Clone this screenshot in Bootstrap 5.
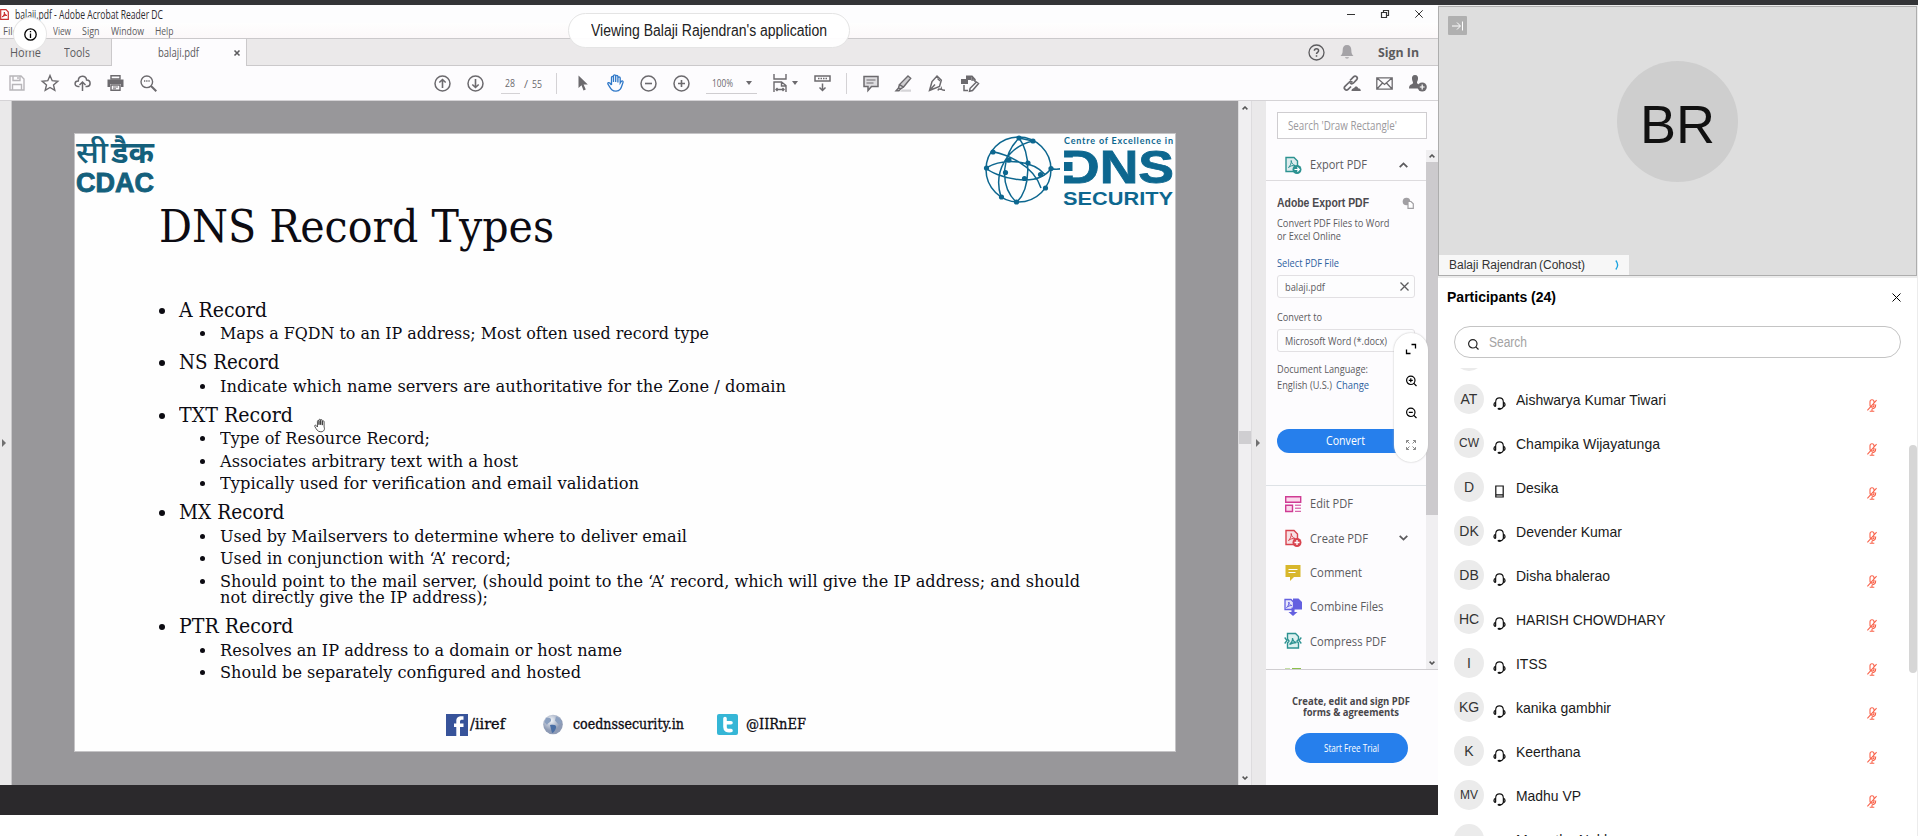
<!DOCTYPE html>
<html lang="en">
<head>
<meta charset="utf-8">
<meta name="viewport" content="width=device-width, initial-scale=1">
<title>Viewing Balaji Rajendran's application</title>
<link href="https://cdn.jsdelivr.net/npm/bootstrap@5.3.0/dist/css/bootstrap.min.css" rel="stylesheet">
<style>
  body{font-family:"Liberation Sans",Arial,sans-serif;background:#fff;color:#000;height:836px;overflow:hidden;line-height:1}
  svg{display:block;flex:none;overflow:visible}
  .stroke{fill:none;stroke:currentColor}
  [data-w]{white-space:nowrap;display:inline-block;transform-origin:0 50%;flex:none}
  .top-strip{height:5px;background:#333437}
  .stage{width:1438px;height:831px}
  .acro{height:780px;font-family:"Open Sans","Noto Sans",sans-serif;color:#5c5b5e;background:#fdfdfe}
  .title-line{height:18px;padding:1px 0 0 0;font-size:12px;color:#2e2c30}
  .app-ic{margin-right:6px}
  .win-ctl{margin-top:-1px;padding-right:15px;gap:26px;color:#333}
  .menu-line{height:15px;font-size:11.5px;background:linear-gradient(#fefefe,#fcf8f9);padding-left:3px}
  .menu-line span+span{margin-left:11px}
  .tabs-line{height:28px;border:1px solid #cbc9cb;border-width:1px 0;background:#ebe9ea;font-size:13px}
  .tab-cell{height:27px}
  .tab-home{padding-left:10px;width:64px}
  .tab-tools{width:48px;border-right:1px solid #cbc9cb}
  .tab-file{width:135px;background:#fdfcfe;border-right:1px solid #cbc9cb;padding:0 6px 0 46px;margin-bottom:-1px}
  .acct{padding-right:19px}
  .bell{margin:0 24px 0 15px}
  .tools-line{height:35px;border-bottom:1px solid #d5d3d6;background:#fdfcfe;color:#6c6a6e;font-size:11px}
  .tool{width:33px;height:34px;display:flex;align-items:center;justify-content:center}
  .tools-mid{margin-left:261px}
  .pages{width:73px;height:34px;padding-left:9px;margin-right:1px}
  .num-box{width:19px;height:21px;border-bottom:1px solid #d4d2d5;text-align:center;line-height:20px}
  .vsep{width:1px;height:21px;background:#d4d2d5}
  .vsep-b{margin:0 7px 0 7px}
  .zoom-box{width:51px;height:21px;border-bottom:1px solid #cfcdd0;margin:0 7px 0 8px;padding:0 5px 0 6px}
  .fit-box{width:42px;padding-left:9px;gap:5px}
  .caret-dn{width:0;height:0;border:3px solid transparent;border-top:4px solid #6c6a6e;border-bottom:0}
  .tri-r{width:0;height:0;border:4px solid transparent;border-left:4px solid #707070;border-right:0}
  .work{height:684px}
  .rail-l{width:12px;background:#eae9ea;border-right:1px solid #c9c8ca;padding-left:2px}
  .canvas{width:1226px;background:#98979a;padding:32px 0 0 62px}
  .sbar{background:#f0eff1;color:#555}
  .sbar-doc{width:14px;border:1px solid #dddcde;border-width:0 1px;padding:5px 0}
  .rail-r{width:14px;background:#eae9ea;padding-left:4px}
  .thumb-doc{height:13px;background:#cfced1;margin-bottom:-1px;transform:translateY(-6px)}

  /* slide */
  .slide{width:1102px;height:619px;background:#fefefe;border:1px solid #c5c4c6;color:#0c0b12;font-family:"DejaVu Serif Condensed","DejaVu Serif","Liberation Serif",serif}
  .logos{height:74px;padding:0 0 0 1px}
  .slide-title{font-size:45px;line-height:56px;margin:-9px 0 0 84px;height:56px;font-weight:400}
  .bul{margin:41.500px 0 0 85px;padding:0;list-style:none}
  .l1{font-size:20.5px;line-height:26.500px;margin-top:3.800px;padding-left:19px;position:relative;height:26.500px}
  .l2{font-size:16.2px;line-height:22.400px;height:22.400px;padding-left:60px;position:relative}
  .l2.cont{margin-top:-5.800px}
  .l1:before,.l2:not(.cont):before{content:"";position:absolute;border-radius:50%;background:#0c0b12}
  .l1:before{width:6px;height:6px;left:-1px;top:11px}
  .l2:before{width:5px;height:5px;left:40px;top:8px}
  .foot{margin:28px 0 0 371px;font-size:15px;height:24px;-webkit-text-stroke:.3px #0c0b12}
  .foot .f1{margin-left:2px}
  .foot .f2{margin-left:38px}.foot .f3{margin-left:33px}
  .foot .f4{margin-left:10px}

  /* tools pane */
  .pane{width:172px;background:#fdfcfe;font-size:11.500px}
  .pane-top{height:49px;padding:11px 0 0 11px}
  .find{width:150px;height:27px;border:1px solid #cfcdd0;background:#fff;color:#9b999d;padding-left:10px;font-size:12px}
  .pane-mid{height:520px;border-bottom:1px solid #d0ced1}
  .pane-list{width:160px;overflow:hidden;height:519px}
  .sbar-pane{width:12px}
  .thumb-pane{height:353px;background:#cccacd}
  .exp{height:31px;border-bottom:1px solid #dddbde;font-size:13.500px;padding:0 18px 0 18px}
  .tool-row{height:34.300px;padding-left:18px;font-size:13.500px}
  .tool-row .ti,.exp .ti{margin-right:8px}
  .chev{margin-right:18px}
  .pl{padding-left:11px}
  .ln{height:13px;display:flex;align-items:center}
  .hd{font-family:"Liberation Sans",sans-serif;font-weight:700;font-size:12px;color:#4c4a4e;margin-top:14px;height:16px;padding-right:12px}
  .blurb{margin-top:5px}
  .link{color:#2d619f}
  .sel{margin-top:14px}
  .f-a{margin-top:6px}
  .cv{margin-top:12px}
  .f-b{margin-top:6px}
  .dl{margin-top:10px}
  .el{margin-top:3px}
  .field{width:138px;height:23px;border:1px solid #e2e0e3;border-radius:3px;padding:0 5px 0 7px;background:#fdfdfe}
  .cta{background:#267fec;color:#fff;border-radius:16px}
  .cta-convert{width:138px;height:24px;font-size:12.500px;margin:38px 0 32px 0}
  .more{padding-top:1px}
  .pane-foot{height:115px;padding-top:25px;font-size:11px;font-weight:700;color:#48464a;padding-right:2px}
  .cta-trial{width:113px;height:30px;font-size:10.500px;font-weight:400;margin:16px 0 0 0}
  .dark-band{height:30px;background:#2b292c}

  /* overlays */
  .info-dot{left:14px;top:18px;width:32px;height:32px;background:#fff;box-shadow:0 0 0 1px #e6e6e6}
  .view-pill{left:568px;top:13px;width:282px;height:35px;background:#fffffff2;border:1px solid #e4e4e4;font-size:16px;color:#222}
  .zoom-pill{left:1394px;top:333px;width:34px;height:129px;border-radius:17px;background:#fff;box-shadow:0 0 2px #bbb}
  .zoom-pill svg{margin:8px 0}
  .hand-cur{left:314px;top:418px}

  /* meeting side */
  .side{width:480px;background:#ececec;padding:1px 1px 0 0}
  .video{height:270px;border:1px solid #adadad;background:#dedede}
  .collapse-btn{left:9px;top:9px;width:19px;height:19px;background:#b0b0b0;border-radius:1px;color:#fff}
  .face{width:121px;height:121px;left:178px;top:54px;background:#cecece;color:#111;font-size:54px;padding-top:5px}
  .who{left:0;bottom:0;width:190px;height:20px;background:#f7f7f7;font-size:12.500px;color:#333;padding:0 10px}
  .role{padding-top:1px;margin-left:2px}
  .people{margin-top:2px;height:558px;background:#fff}
  .p-head{height:38px;padding:0 16px 0 9px;font-size:14px;font-weight:700}
  .p-find{height:32px;border:1px solid #c4c4c4;margin:10px 16px 10px 16px;padding-left:13px;font-size:14px;color:#a3a3a3}
  .p-find .glass{margin:4px 10px 0 0}
  .p-scroll{height:468px;overflow:hidden}
  .prev{height:3px;overflow:hidden;padding-left:16px}
  .prev .av{margin-top:-27px}
  .rows-in{padding-top:6px}
  .av{width:30px;height:30px;background:#ebebeb;border-radius:50%;font-size:14px;color:#333;flex:none}
  .av.sm{font-size:12px}
  .rowp{height:44px;padding:0 40px 0 16px;font-size:15px;color:#1a1a1a}
  .rowp .dev{margin:9px 10px 0 9px}
  .rowp .mic{margin-top:12px;color:#f9634b}
  .p-thumb{width:8px;height:228px;right:0;top:167px;background:#d6d6d6}
</style>
</head>
<body>
<svg width="0" height="0" class="position-absolute">
  <defs>
    <symbol id="headset" viewBox="0 0 13 13"><path d="M2.600 9.400C1.600 9.600.9 8.600.9 7.500s.5-1.900 1.600-2M10.400 9.400c1 .2 1.700-.8 1.700-1.900s-.5-1.900-1.600-2M2.700 9.200V4.600C2.900 2.200 4.500.9 6.500.9s3.600 1.300 3.800 3.700v4.600M10.300 9.400C10 11 8.600 11.800 7 11.900" fill="none" stroke="#111" stroke-width="1.100"/><path d="M2.200 5.200v4.300M10.800 5.200v4.300" stroke="#111" stroke-width="1.200"/><ellipse cx="6.300" cy="11.800" rx="1.800" ry="1.100" fill="#111"/></symbol>
    <symbol id="phone" viewBox="0 0 13 13"><path d="M2.800 1h7.400v11H2.800zM2.800 9.800h7.400" fill="none" stroke="#111" stroke-width="1.200"/></symbol>
    <symbol id="mute" viewBox="0 0 10 13"><path d="M5 .7C6.300.7 7 1.600 7 2.700V6C7 7.400 6.100 8.100 5 8.100S3 7.400 3 6V2.700C3 1.600 3.700.7 5 .7zM8.700 5.500C8.700 8.500 7.200 9.700 5 9.700M5 9.700V12.300M2.700 12.300H7.300M.4 11.300L9.600 1.200" fill="none" stroke="currentColor" stroke-width="1.100"/></symbol>
    <symbol id="up" viewBox="0 0 6 4"><path d="M.6 3.400L3 1l2.400 2.400" fill="none" stroke="#555" stroke-width="1.500"/></symbol>
    <symbol id="down" viewBox="0 0 6 4"><path d="M.6.6L3 3 5.400.6" fill="none" stroke="#555" stroke-width="1.500"/></symbol>
    <symbol id="pdfsheet" viewBox="0 0 18 18"><path d="M2 1.500h8l3.500 3.500v10.500H2z" fill="currentColor" fill-opacity=".15" stroke="currentColor" stroke-width="1.400"/><path d="M4.500 11.500C6.500 9.500 7.500 7 7.200 4.500c.3 3 2 4.500 4 5-2.500-.3-4.500.3-6.700 2z" fill="none" stroke="currentColor" stroke-width="1"/></symbol>
  </defs>
</svg>

<div class="top-strip"></div>
<div class="d-flex">
  <div class="stage">
    <div class="acro">
      <div class="title-line d-flex justify-content-between">
        <div class="d-flex align-items-center">
          <svg class="app-ic" width="9" height="11" viewBox="0 0 9 11"><path d="M.7.7H6l2.300 2.300v7.300H.7z" fill="#fff" stroke="#c9302f" stroke-width="1.200"/><path d="M2 8C4 6.500 4.500 5 4.300 3c.2 2 1.200 3 2.700 3.500C5 6.300 3.500 7 2 8z" fill="#c9302f" stroke="#c9302f"/></svg>
          <span data-w="148">balaii.pdf - Adobe Acrobat Reader DC</span>
        </div>
        <div class="win-ctl d-flex align-items-center">
          <svg width="8" height="9"><path d="M0 4.500h8" class="stroke"/></svg>
          <svg width="8" height="8" viewBox="0 0 8 8"><path d="M.5 2.500h5v5h-5zM2.500 2V.5h5v5H6" class="stroke" stroke-width="1.200"/></svg>
          <svg width="8" height="8" viewBox="0 0 8 8"><path d="M.3.3l7.400 7.400M7.700.3L.3 7.700" class="stroke"/></svg>
        </div>
      </div>
      <div class="menu-line d-flex align-items-center"><span data-w="15">File</span><span data-w="13">Edit</span><span data-w="18">View</span><span data-w="17.500">Sign</span><span data-w="33">Window</span><span data-w="18.500">Help</span></div>
      <div class="tabs-line d-flex align-items-center">
        <div class="tab-cell tab-home d-flex align-items-center"><span data-w="31">Home</span></div>
        <div class="tab-cell tab-tools d-flex align-items-center"><span data-w="26">Tools</span></div>
        <div class="tab-cell tab-file d-flex align-items-center justify-content-between"><span data-w="41">balaji.pdf</span><svg width="6" height="6" viewBox="0 0 6 6"><path d="M.5.5l5 5M5.500.5l-5 5" class="stroke" stroke-width="1.600"/></svg></div>
        <div class="ms-auto d-flex align-items-center acct">
          <svg width="17" height="17" viewBox="0 0 17 17"><circle cx="8.500" cy="8.500" r="7.500" class="stroke" stroke-width="1.300"/><path d="M6.400 6.800c0-1.300.9-2 2.100-2s2.100.7 2.100 1.900c0 1.600-2.100 1.600-2.100 3.300M8.500 11.200v1.500" class="stroke" stroke-width="1.500"/></svg>
          <svg class="bell" width="14" height="16" viewBox="0 0 14 16"><path d="M7 1c3 0 4.300 2 4.300 5 0 3.500.8 4.500 2.200 6H.5c1.400-1.500 2.200-2.500 2.200-6 0-3 1.300-5 4.300-5zM5 13.200h4C8.700 15 5.300 15 5 13.200z" fill="#a5a3a7"/></svg>
          <b data-w="41">Sign In</b>
        </div>
      </div>
      <div class="tools-line d-flex align-items-center">
        <div class="tool"><svg width="16" height="16" viewBox="0 0 16 16" color="#b7b5b9"><path d="M1 1h11l3 3v11H1zM4 1v4.500h7V1M3.500 15V9.500h9V15M9 2v2" class="stroke" stroke-width="1.400"/></svg></div>
        <div class="tool"><svg width="18" height="18" viewBox="0 0 18 18"><path d="M9 1.500l2.200 5.200 5.600.5-4.300 3.700 1.300 5.500L9 13.500l-4.800 2.900 1.300-5.500L1.200 7.200l5.600-.5z" class="stroke" stroke-width="1.400"/></svg></div>
        <div class="tool"><svg width="17" height="16" viewBox="0 0 17 16"><path d="M5.500 11.500H4C-.2 11.300.3 5.800 4.300 6 4.200 0 12.400-.3 12.600 5c4.700.2 4.500 6.300.4 6.500h-1.500M8.500 16V7.500M5.500 10l3-3 3 3" class="stroke" stroke-width="1.500"/></svg></div>
        <div class="tool"><svg width="17" height="16" viewBox="0 0 17 16"><path d="M4 .8h9V4H4zM4 10h9v5.300H4z" class="stroke" stroke-width="1.400"/><path d="M.5 4.500h16V12H14V9H3v3H.5z" fill="currentColor"/><path d="M6 12h5M6 13.800h3" class="stroke" stroke-width=".9"/></svg></div>
        <div class="tool"><svg width="17" height="17" viewBox="0 0 17 17"><circle cx="6.800" cy="6.800" r="5.800" class="stroke" stroke-width="1.400"/><path d="M11 11l5.300 5.300" class="stroke" stroke-width="2"/><path d="M4 6h1.300M6.200 6h1.300M8.400 6h1.300" class="stroke" stroke-width="1.500"/></svg></div>
        <div class="tool tools-mid"><svg width="17" height="17" viewBox="0 0 17 17"><circle cx="8.500" cy="8.500" r="7.500" class="stroke" stroke-width="1.500"/><path d="M8.500 13V4.500M5.300 7.500l3.200-3 3.200 3" class="stroke" stroke-width="1.600"/></svg></div>
        <div class="tool"><svg width="17" height="17" viewBox="0 0 17 17"><circle cx="8.500" cy="8.500" r="7.500" class="stroke" stroke-width="1.500"/><path d="M8.500 4v8.500M5.300 9.500l3.200 3 3.200-3" class="stroke" stroke-width="1.600"/></svg></div>
        <div class="pages d-flex align-items-center"><div class="num-box"><span data-w="10">28</span></div><span class="ms-1 me-1">/</span><span data-w="10">55</span><div class="vsep ms-auto me-2"></div></div>
        <div class="tool"><svg width="10" height="16" viewBox="0 0 10 16"><path d="M.5.5v12.500l3-2.800 2 5.300 2.300-1-2.200-5h4.200z" fill="currentColor"/></svg></div>
        <div class="tool"><svg width="17" height="18" viewBox="0 0 17 18" color="#2f78c8"><path d="M4.500 11V3.500c0-1.500 2-1.500 2 0V8 2c0-1.600 2.200-1.600 2.200 0v6-5.500c0-1.500 2.200-1.500 2.200 0V8.500 4c0-1.500 2.300-1.500 2.300 0v5l1-1.500c1-1.200 2.300-.4 1.800.9C14.500 12.500 14 17.200 9 17.200c-4.500 0-5.500-3-8-7-.8-1.600 1-2 1.800-1.200L4.500 11" class="stroke" stroke-width="1.300"/></svg></div>
        <div class="tool"><svg width="17" height="17" viewBox="0 0 17 17"><circle cx="8.500" cy="8.500" r="7.500" class="stroke" stroke-width="1.500"/><path d="M5 8.500h7" class="stroke" stroke-width="1.600"/></svg></div>
        <div class="tool"><svg width="17" height="17" viewBox="0 0 17 17"><circle cx="8.500" cy="8.500" r="7.500" class="stroke" stroke-width="1.500"/><path d="M5 8.500h7M8.500 5v7" class="stroke" stroke-width="1.600"/></svg></div>
        <div class="zoom-box d-flex align-items-center justify-content-between"><span data-w="21">100%</span><i class="caret-dn"></i></div>
        <div class="fit-box d-flex align-items-center"><svg width="14" height="18" viewBox="0 0 14 18"><path d="M1 0v5h12V0M1 18V8h7.500L13 11.500V18M8.500 8v4H13M3 15.500h8M4.500 14L3 15.500 4.500 17M9.500 14l1.500 1.500L9.500 17" class="stroke" stroke-width="1.400"/></svg><i class="caret-dn"></i></div>
        <div class="tool"><svg width="17" height="17" viewBox="0 0 17 17"><path d="M1 1h15v5H1zM8.500 8.500v7M5.500 12.500l3 3 3-3" class="stroke" stroke-width="1.500"/><path d="M4 3.500h9" class="stroke" stroke-width="1.400" stroke-dasharray="1.500 1"/></svg></div>
        <div class="vsep vsep-b"></div>
        <div class="tool"><svg width="16" height="17" viewBox="0 0 16 17"><path d="M1 1.500h14v10H8.500L5 15.500v-4H1z" fill="#dedde0" stroke="currentColor" stroke-width="1.500"/><path d="M3.500 5h9M3.500 8h7" class="stroke" stroke-width="1.200"/></svg></div>
        <div class="tool"><svg width="17" height="17" viewBox="0 0 17 17"><path d="M7 14.500h9v2.300H5z" fill="#d5d4d7"/><path d="M13 1l2.700 2.300-7.200 8.700-4-2.500zM4.500 9.500l-1 3.200 2 1.400 3-2.100M3.500 13L1 15.800h3l1.500-1.700" fill="#cfced1" stroke="currentColor" stroke-width="1.400"/></svg></div>
        <div class="tool"><svg width="17" height="17" viewBox="0 0 17 17"><path d="M9 1l4.300 4.300-1.800 6.200L1.500 15.500 4 6.500zM1.500 15.500L7 9.500M10 15.500c1-3.500 2 .5 3.200-2 .3 2 1.300 1.800 3.800 1.800" class="stroke" stroke-width="1.500"/><path d="M9.500 3.500l2.500 2.500" class="stroke" stroke-width="1.200"/></svg></div>
        <div class="tool"><svg width="18" height="17" viewBox="0 0 18 17"><path d="M0 4h7v5H0zM5 2h5v3H5z" fill="currentColor"/><path d="M5 1.200h6l3 3.300V7M3 10v5.500h4M11 1.500V5h3M15.500 7l2 1.500-6 7-3 .8.600-3z" class="stroke" stroke-width="1.500"/></svg></div>
        <div class="tool ms-auto"><svg width="18" height="17" viewBox="0 0 18 17"><path d="M7 5.500l3.500-3.700c2-2 5 .8 3.200 2.900L10.500 8c-1.200 1.200-2.600 1-3.500 0M9.500 7.500c-1-1.200-2.500-1.200-3.600 0L2 11.300c-2 2.200 1 5 3.100 3L8 11.500" class="stroke" stroke-width="1.700"/><path d="M8.500 16c0-2.500 2-2.500 2.700-3 1-2.200 3.600-1.600 3.900.3 2 0 2.700 1.200 2.700 2.700z" fill="currentColor"/></svg></div>
        <div class="tool"><svg width="17" height="13" viewBox="0 0 17 13"><path d="M.8.8h15.400v11.400H.8zM1 1l7.500 6.500L16 1M1 12l5.500-6M16 12l-5.500-6" class="stroke" stroke-width="1.300"/></svg></div>
        <div class="tool me-1"><svg width="18" height="17" viewBox="0 0 18 17"><path d="M6 0c2.500 0 3.300 1.700 3 4-.2 1.800-1 2.300-1 3.700C8 9 10 9 10.500 10L9 13.500H0c0-5 4-3.500 4-5.700C4 6.500 3.200 6 3 4 2.800 1.700 3.500 0 6 0z" fill="currentColor"/><circle cx="13.200" cy="12" r="4.600" fill="currentColor"/><path d="M10.800 12h4.800M13.200 9.600v4.800" stroke="#fff" stroke-width="1.200"/></svg></div>
      </div>
      <div class="work d-flex">
        <div class="rail-l d-flex align-items-center"><i class="tri-r"></i></div>
        <div class="canvas">
          <div class="slide">
            <div class="logos d-flex justify-content-between">
              <svg width="79" height="60" viewBox="0 0 79 60" fill="#14607c">
                <text x="0" y="29" font-size="31" font-weight="500" textLength="32" lengthAdjust="spacingAndGlyphs" font-family="Noto Sans Devanagari,Lohit Devanagari,Noto Sans,sans-serif">सी</text>
                <text x="35" y="29" font-size="31" font-weight="700" textLength="43" lengthAdjust="spacingAndGlyphs" font-family="Noto Sans Devanagari,Lohit Devanagari,Noto Sans,sans-serif">डैक</text>
                <text x="0" y="57.500" font-size="27" font-weight="700" textLength="78" lengthAdjust="spacingAndGlyphs" font-family="Liberation Sans" stroke="#14607c" stroke-width=".9">CDAC</text>
              </svg>
              <svg width="192" height="74" viewBox="0 0 192 74" color="#0d678f">
                <g class="stroke" stroke-width="1.500">
                  <circle cx="35.500" cy="35.500" r="32.500"/>
                  <path d="M3 34C22 23 50 27 62 40.500M36 4c12 16 12 50-2 64M9 17.500C22 20 50 30 58 54M50 7C24 13 10 38 18 63M36 4l14 3M3 34c8 8 50 22 65 .5M36 4C20 20 15 50 33 68"/>
                  <path d="M68 34.500q6 2 14-1"/>
                </g>
                <g fill="currentColor"><circle cx="36" cy="4" r="2.600"/><circle cx="50" cy="7" r="2.600"/><circle cx="10" cy="18" r="2.600"/><circle cx="3.500" cy="34" r="2.600"/><circle cx="26" cy="26" r="2.600"/><circle cx="45" cy="29" r="2.600"/><circle cx="22.500" cy="38.500" r="2.600"/><circle cx="68" cy="34.500" r="2.600"/><circle cx="57.500" cy="40.500" r="2.600"/><circle cx="41.500" cy="44.500" r="2.600"/><circle cx="62.500" cy="54" r="2.600"/><circle cx="18.500" cy="63" r="2.600"/><circle cx="33.500" cy="68" r="2.600"/>
                <text x="81" y="10" font-size="9" font-weight="700" textLength="109" font-family="Lato">Centre of Excellence in</text>
                <text x="78" y="49" font-size="46" font-weight="700" textLength="113" lengthAdjust="spacingAndGlyphs" font-family="Liberation Sans" stroke="currentColor" stroke-width=".8">DNS</text>
                <path d="M77 23.500h14v18H77z" fill="#fefefe"/><path d="M81 28h8.500v9H81z"/>
                <text x="80" y="71" font-size="18.500" font-weight="700" textLength="110" lengthAdjust="spacingAndGlyphs" font-family="Liberation Sans">SECURITY</text></g>
              </svg>
            </div>
            <h1 class="slide-title mb-0"><span data-w="395">DNS Record Types</span></h1>
            <ul class="bul">
              <li class="l1 mt-0"><span data-w="88">A Record</span></li>
              <li class="l2"><span data-w="489">Maps a FQDN to an IP address; Most often used record type</span></li>
              <li class="l1"><span data-w="100.500">NS Record</span></li>
              <li class="l2"><span data-w="566">Indicate which name servers are authoritative for the Zone / domain</span></li>
              <li class="l1"><span data-w="114">TXT Record</span></li>
              <li class="l2"><span data-w="210">Type of Resource Record;</span></li>
              <li class="l2"><span data-w="298">Associates arbitrary text with a host</span></li>
              <li class="l2"><span data-w="419">Typically used for verification and email validation</span></li>
              <li class="l1"><span data-w="105.500">MX Record</span></li>
              <li class="l2"><span data-w="467">Used by Mailservers to determine where to deliver email</span></li>
              <li class="l2"><span data-w="291">Used in conjunction with ‘A’ record;</span></li>
              <li class="l2"><span data-w="860">Should point to the mail server, (should point to the ‘A’ record, which will give the IP address; and should</span></li>
              <li class="l2 cont"><span data-w="268">not directly give the IP address);</span></li>
              <li class="l1"><span data-w="114.500">PTR Record</span></li>
              <li class="l2"><span data-w="402">Resolves an IP address to a domain or host name</span></li>
              <li class="l2"><span data-w="361">Should be separately configured and hosted</span></li>
            </ul>
            <div class="foot d-flex align-items-center">
              <svg width="22" height="22" viewBox="0 0 22 22"><path d="M0 0h22v22H0z" fill="#37539a"/><path d="M14 22v-9h3.500v-3.500H14V7.500c0-1.500.7-1.900 3.500-1.800V2.300C12 1.800 10.300 3.800 10.300 7v2.500H8V13h2.300v9z" fill="#fff"/></svg>
              <span data-w="35" class="f1">/iiref</span>
              <svg class="f2" width="20" height="21" viewBox="0 0 20 21"><defs><radialGradient id="gl" cx=".4" cy=".3"><stop offset="0" stop-color="#f5f8fb"/><stop offset="1" stop-color="#8e9bb5"/></radialGradient></defs><circle cx="10" cy="10.500" r="9.800" fill="url(#gl)"/><path d="M3 4c3-1 6 0 5 3-1 2-3 1.500-4 4L1.500 8zM13 2.500c3 1 5 3 5.500 6l-3 2-3.500-4z" fill="#8ba0c0"/><path d="M7 11c4-1 7 0 6 3-1 3-3 5-4 5z" fill="#4a6fa5"/></svg>
              <span data-w="111" class="f4">coednssecurity.in</span>
              <svg class="f3" width="21" height="21" viewBox="0 0 21 21"><rect width="21" height="21" rx="2" fill="#35b6d6"/><path d="M8 4.500v8.500c0 3 2 4 6 3.500M8 8.800h6" fill="none" stroke="#fff" stroke-width="3.600" stroke-linecap="round"/></svg>
              <span data-w="60" class="ms-2">@IIRnEF</span>
            </div>
          </div>
        </div>
        <div class="sbar sbar-doc d-flex flex-column align-items-center">
          <svg width="6" height="4" class="mb-auto"><use href="#up"/></svg>
          <div class="thumb-doc w-100"></div>
          <svg width="6" height="4" class="mt-auto"><use href="#down"/></svg>
        </div>
        <div class="rail-r d-flex align-items-center"><i class="tri-r"></i></div>
        <div class="pane">
          <div class="pane-top"><div class="find d-flex align-items-center"><span data-w="109">Search 'Draw Rectangle'</span></div></div>
          <div class="pane-mid d-flex">
            <div class="pane-list">
              <div class="exp d-flex align-items-center"><svg class="ti" width="18" height="18" viewBox="0 0 18 18" color="#2c9291"><use href="#pdfsheet"/><circle cx="13" cy="13.500" r="4.500" fill="currentColor"/><path d="M10.500 13.500h4.500M13.300 11.500l2 2-2 2" fill="none" stroke="#fff" stroke-width="1.200"/></svg><span data-w="57">Export PDF</span><svg class="ms-auto" width="9" height="6" viewBox="0 0 9 6"><path d="M.7 5.200L4.500 1.400l3.800 3.800" class="stroke" stroke-width="1.800"/></svg></div>
              <div class="pl">
                <div class="hd d-flex align-items-center justify-content-between"><span data-w="92">Adobe Export PDF</span><svg width="12" height="12" viewBox="0 0 12 12" color="#a19fa3"><circle cx="4.500" cy="4.500" r="3.800" fill="currentColor"/><path d="M6 4.500h3l2.300 2.300v4.500H6z" fill="#fff" stroke="currentColor" stroke-width="1.200"/></svg></div>
                <div class="ln blurb"><span data-w="112.500">Convert PDF Files to Word</span></div>
                <div class="ln"><span data-w="64">or Excel Online</span></div>
                <div class="ln link sel"><span data-w="62">Select PDF File</span></div>
                <div class="field d-flex align-items-center justify-content-between f-a"><span data-w="40">balaji.pdf</span><svg width="9" height="9" viewBox="0 0 9 9"><path d="M.5.5l8 8M8.500.5l-8 8" class="stroke" stroke-width="1.300"/></svg></div>
                <div class="ln cv"><span data-w="45">Convert to</span></div>
                <div class="field d-flex align-items-center f-b"><span data-w="102">Microsoft Word (*.docx)</span></div>
                <div class="ln dl"><span data-w="91">Document Language:</span></div>
                <div class="ln el"><span data-w="55">English (U.S.)</span><span class="ps-1"></span><span class="link" data-w="33">Change</span></div>
                <div class="cta cta-convert d-flex align-items-center justify-content-center"><span data-w="39">Convert</span></div>
              </div>
              <div class="border-top more">
                <div class="tool-row d-flex align-items-center"><svg class="ti" width="18" height="18" viewBox="0 0 18 18" color="#cf3c94"><path d="M1.700 1.700h15v5.500h-15zM1.700 10.200H8.500v6.300H1.700z" fill="#fbd9ec" stroke="currentColor" stroke-width="1.400"/><path d="M11 10.200h6M11 13.200h6M11 16.300h6" stroke="currentColor"/></svg><span data-w="43">Edit PDF</span></div>
                <div class="tool-row d-flex align-items-center"><svg class="ti" width="18" height="18" viewBox="0 0 18 18" color="#d8434e"><use href="#pdfsheet"/><circle cx="13" cy="13.500" r="4.500" fill="currentColor"/><path d="M10.500 13.500h5M13 11v5" stroke="#fff" stroke-width="1.300"/></svg><span data-w="58">Create PDF</span><svg class="ms-auto chev" width="9" height="6" viewBox="0 0 9 6"><path d="M.7.8l3.800 3.800L8.300.8" class="stroke" stroke-width="1.800"/></svg></div>
                <div class="tool-row d-flex align-items-center"><svg class="ti" width="18" height="18" viewBox="0 0 18 18"><path d="M1.500 1h15v12H10l-4 4v-4H1.500z" fill="#d8b72c"/><path d="M4.500 5.500h9M4.500 8.500h7" stroke="#fff" stroke-width="1.200"/></svg><span data-w="52">Comment</span></div>
                <div class="tool-row d-flex align-items-center"><svg class="ti" width="18" height="18" viewBox="0 0 18 18" color="#6460e0"><path d="M9 .5h5.500L18 4v7.500H9z" fill="currentColor"/><path d="M1 1.500h6l2.500 2.500v7.500H1z" fill="#e8e7fb" stroke="currentColor" stroke-width="1.300"/><path d="M2.500 9.500C4.500 8 5 6 4.800 4c.2 2 1.200 3 3 3.500-2 0-3.500.7-5.300 2z" class="stroke"/><path d="M7.500 9.500h3V14h3L9 18l-4.500-4h3z" fill="currentColor"/></svg><span data-w="73.500">Combine Files</span></div>
                <div class="tool-row d-flex align-items-center"><svg class="ti" width="18" height="18" viewBox="0 0 18 18" color="#2c9291"><path d="M3.500 1.500h8l3 3v3L13 9l1.500 2v5h-11v-5L5 9 3.500 7z" fill="#dcf1f0" stroke="currentColor" stroke-width="1.400"/><path d="M5.500 12.500c2.500-2 3.300-4 3-6.500.3 2.500 1.500 4 4 4.500-2.500 0-4.500.5-7 2zM.7 5.500L3 8.500.7 11.500M17.300 5.500L15 8.500l2.300 3" class="stroke" stroke-width="1.300"/></svg><span data-w="76">Compress PDF</span></div>
                <div class="tool-row d-flex align-items-center"><svg class="ti" width="18" height="18" viewBox="0 0 18 18"><path d="M1 1.500h5v2H1zM8 1h9v15H8z" fill="#8cc04b"/></svg></div>
              </div>
            </div>
            <div class="sbar sbar-pane d-flex flex-column align-items-center"><svg width="6" height="4" class="mt-1 mb-1"><use href="#up"/></svg><div class="thumb-pane w-100"></div><svg width="6" height="4" class="mt-auto mb-1"><use href="#down"/></svg></div>
          </div>
          <div class="pane-foot d-flex flex-column align-items-center">
            <span data-w="118">Create, edit and sign PDF</span>
            <span data-w="96">forms &amp; agreements</span>
            <div class="cta cta-trial d-flex align-items-center justify-content-center"><span data-w="55">Start Free Trial</span></div>
          </div>
        </div>
      </div>
    </div>
    <div class="dark-band"></div>
  </div>

  <aside class="side">
    <div class="video position-relative">
      <div class="collapse-btn position-absolute d-flex align-items-center justify-content-center"><svg width="11" height="10" viewBox="0 0 11 10"><path d="M0 5h8M5 1.500L8.500 5 5 8.500M10.500.5v9" class="stroke"/></svg></div>
      <div class="face position-absolute rounded-circle d-flex align-items-center justify-content-center"><span data-w="75">BR</span></div>
      <div class="who position-absolute d-flex align-items-center"><span data-w="88">Balaji Rajendran</span><span class="role" data-w="46">(Cohost)</span><svg class="ms-auto" width="4" height="10" viewBox="0 0 4 10"><path d="M.8.5Q4.500 5 .8 9.500" fill="none" stroke="#1aa3e0" stroke-width="1.300"/></svg></div>
    </div>
    <div class="people position-relative">
      <div class="p-head d-flex align-items-center justify-content-between"><span data-w="109">Participants (24)</span><svg width="9" height="9" viewBox="0 0 9 9"><path d="M.5.5l8 8M8.500.5l-8 8" class="stroke"/></svg></div>
      <div class="p-find rounded-pill d-flex align-items-center"><svg class="glass" width="11" height="11" viewBox="0 0 11 11" color="#222"><circle cx="4.800" cy="4.800" r="4.200" class="stroke" stroke-width="1.200"/><path d="M7.800 7.800l2.700 2.700" class="stroke" stroke-width="1.200"/></svg><span data-w="38">Search</span></div>
      <div class="p-scroll">
        <div class="prev"><div class="av"></div></div>
        <div id="rows" class="rows-in"></div>
      </div>
      <div class="p-thumb position-absolute rounded-pill"></div>
    </div>
  </aside>
</div>

<div class="info-dot position-absolute rounded-circle d-flex align-items-center justify-content-center"><svg width="13" height="13" viewBox="0 0 13 13"><circle cx="6.500" cy="6.500" r="5.700" class="stroke" stroke-width="1.300"/><path d="M6.500 5.500V10M6.500 3v1.300" class="stroke" stroke-width="1.300"/></svg></div>
<div class="view-pill position-absolute rounded-pill d-flex align-items-center justify-content-center"><span data-w="236">Viewing Balaji Rajendran's application</span></div>
<svg class="hand-cur position-absolute" width="13" height="15" viewBox="0 0 17 18"><path d="M4.500 11V3.500c0-1.500 2-1.500 2 0V8 2c0-1.600 2.200-1.600 2.200 0v6-5.500c0-1.500 2.200-1.500 2.200 0V8.500 4c0-1.500 2.300-1.500 2.300 0v7C14.500 14 13 17.200 9 17.200c-4.500 0-5.500-3-8-7-.8-1.600 1-2 1.800-1.200L4.500 11" fill="#fff" stroke="#333" stroke-width="1.100"/></svg>
<div class="zoom-pill position-absolute d-flex flex-column align-items-center">
  <svg width="10" height="16" viewBox="0 0 10 16"><path d="M5.500 3.500h4v4M.5 8.500v4h4" class="stroke" stroke-width="1.300"/></svg>
  <svg width="11" height="16" viewBox="0 0 11 16"><circle cx="4.800" cy="7.300" r="4.200" class="stroke" stroke-width="1.200"/><path d="M7.800 10.300l2.700 2.700M2.800 7.300h4M4.800 5.300v4" class="stroke" stroke-width="1.200"/></svg>
  <svg width="11" height="16" viewBox="0 0 11 16"><circle cx="4.800" cy="7.300" r="4.200" class="stroke" stroke-width="1.200"/><path d="M7.800 10.300l2.700 2.700M2.800 7.300h4" class="stroke" stroke-width="1.200"/></svg>
  <svg width="10" height="16" viewBox="0 0 10 16" color="#8a8a8a"><path d="M.5 6V3.500H3M7 3.500h2.500V6M9.500 10v2.500H7M3 12.500H.5V10M.5 3.500l3 3M9.500 3.500l-3 3M9.500 12.500l-3-3M.5 12.500l3-3" class="stroke"/></svg>
</div>

<script src="https://cdn.jsdelivr.net/npm/bootstrap@5.3.0/dist/js/bootstrap.bundle.min.js"></script>
<script>
  const people = [
    ["AT","Aishwarya Kumar Tiwari",150],["CW","Champika Wijayatunga",144],["D","Desika",42.5,"phone"],
    ["DK","Devender Kumar",106],["DB","Disha bhalerao",94],["HC","HARISH CHOWDHARY",149.5],["I","ITSS",31],
    ["KG","kanika gambhir",95],["K","Keerthana",64.5],["MV","Madhu VP",65],["","Mamatha Nukk",95,"none"]
  ];
  document.getElementById("rows").innerHTML = people.map(([ini, name, w, dev = "headset"]) =>
    `<div class="rowp d-flex align-items-center"><div class="av ${/W|M/.test(ini) ? "sm" : ""} d-flex align-items-center justify-content-center">${ini}</div>
     <svg class="dev" width="13" height="13"><use href="#${dev}"/></svg><span data-w="${w}">${name}</span>
     <svg class="mic ms-auto" width="10" height="13"><use href="#mute"/></svg></div>`).join("");

  document.querySelectorAll("[data-w]").forEach(el => {
    const w = parseFloat(el.dataset.w), n = el.getBoundingClientRect().width;
    el.style.transform = `scaleX(${(w / n).toFixed(4)})`;
    el.style.marginRight = (w - n).toFixed(2) + "px";
  });
</script>
</body>
</html>
